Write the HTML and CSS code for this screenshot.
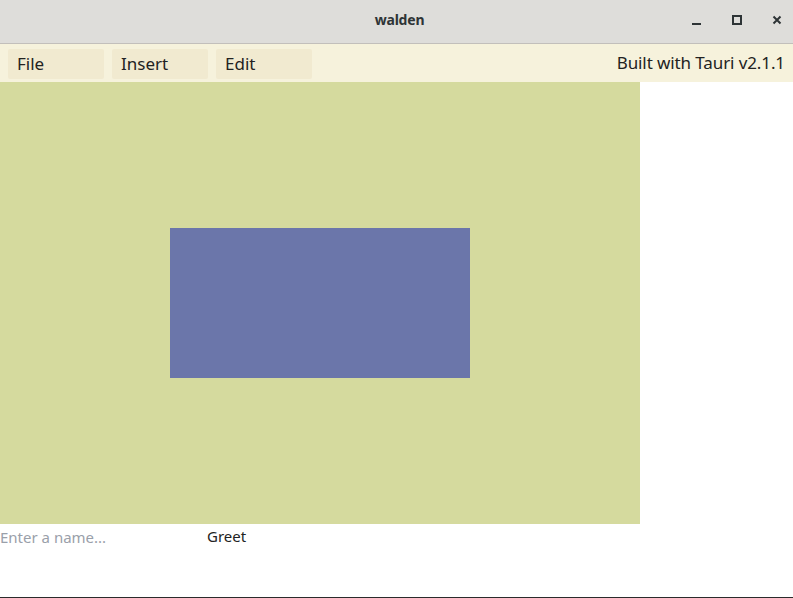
FILE: index.html
```html
<!DOCTYPE html>
<html>
<head>
<meta charset="utf-8">
<title>walden</title>
<link rel="stylesheet" href="styles.css">
</head>
<body>
<div class="window">
  <header class="titlebar">
    <span class="title">walden</span>
    <div class="controls">
      <svg class="ctl" width="12" height="12" viewBox="0 0 12 12"><rect x="1" y="9" width="9" height="2" fill="#2e3436"/></svg>
      <svg class="ctl" width="12" height="12" viewBox="0 0 12 12"><rect x="2" y="2" width="8" height="8" fill="none" stroke="#2e3436" stroke-width="2"/></svg>
      <svg class="ctl" width="12" height="12" viewBox="0 0 12 12"><path d="M2.5 2.5 L9.5 9.5 M9.5 2.5 L2.5 9.5" stroke="#2e3436" stroke-width="2"/></svg>
    </div>
  </header>
  <nav class="menubar">
    <button class="menu">File</button>
    <button class="menu">Insert</button>
    <button class="menu">Edit</button>
    <span class="built">Built with Tauri v2.1.1</span>
  </nav>
  <main class="content">
    <div class="canvas">
      <div class="shape"></div>
    </div>
    <form class="greet">
      <input class="name" placeholder="Enter a name...">
      <button class="greet-btn" type="button">Greet</button>
    </form>
  </main>
</div>
</body>
</html>
```
FILE: styles.css
```css
html, body {
  margin: 0;
  padding: 0;
  background: #ffffff;
}
.window {
  width: 793px;
  height: 598px;
  display: flex;
  flex-direction: column;
  box-sizing: border-box;
  border-bottom: 1px solid #2b2b2b;
  overflow: hidden;
}
.titlebar {
  height: 43px;
  flex: none;
  background: #deddda;
  border-bottom: 1px solid #c2bfbb;
  position: relative;
  display: flex;
  align-items: center;
  justify-content: center;
}
.title {
  font-family: "Noto Sans", "Open Sans", sans-serif;
  font-weight: bold;
  font-size: 14px;
  letter-spacing: -0.2px;
  color: #2e3436;
  margin-top: -4px;
  margin-left: 6px;
}
.controls {
  position: absolute;
  right: 10px;
  top: 14px;
  display: flex;
  gap: 28px;
}
.ctl {
  display: block;
}
.menubar {
  height: 38px;
  flex: none;
  background: #f6f2dc;
  display: flex;
  align-items: center;
  gap: 8px;
  padding: 0 8px;
  box-sizing: border-box;
}
.menu {
  width: 96px;
  height: 30px;
  border: none;
  border-radius: 2px;
  background: #f1ead0;
  font-family: "Noto Sans", "Open Sans", sans-serif;
  font-size: 17px;
  color: #222;
  text-align: left;
  padding: 0 0 0 9px;
  margin-top: 1px;
}
.built {
  margin-left: auto;
  font-family: "Noto Sans", "Open Sans", sans-serif;
  font-size: 17px;
  letter-spacing: -0.1px;
  color: #222;
  margin-right: 0;
  margin-top: -2px;
}
.content {
  flex: 1;
  display: flex;
  flex-direction: column;
}
.canvas {
  width: 640px;
  height: 442px;
  background: #d5da9e;
  display: flex;
  align-items: center;
  justify-content: center;
}
.shape {
  width: 300px;
  height: 150px;
  background: #6b76aa;
}
.greet {
  display: flex;
  align-items: center;
  height: 26px;
  margin: 0;
}
.name {
  width: 207px;
  box-sizing: border-box;
  border: none;
  outline: none;
  padding: 0;
  background: transparent;
  font-family: "Noto Sans", "Open Sans", sans-serif;
  font-size: 15px;
}
.name::placeholder {
  color: #9aa0aa;
}
.greet-btn {
  border: none;
  background: transparent;
  padding: 0;
  font-family: "Noto Sans", "Open Sans", sans-serif;
  font-size: 15px;
  color: #222;
  margin-top: -2px;
}
```
